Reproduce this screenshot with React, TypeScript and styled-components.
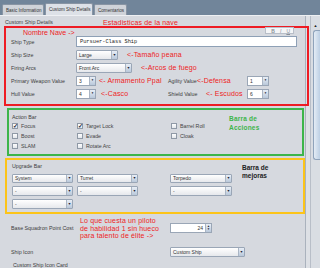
import React from "react";
import styled, { createGlobalStyle } from "styled-components";

const Global = createGlobalStyle`
  html, body { margin: 0; padding: 0; background: #d6d9df; }
  body { font-family: "Liberation Sans", Arial, sans-serif; }
`;

const Frame = styled.div`
  width: 320px;
  height: 268px;
  overflow: hidden;
  display: flex;
  flex-direction: column;
  background: #d6d9df;
`;

const TabStrip = styled.div`
  height: 15px;
  flex: none;
  background: #71859a;
  display: flex;
  align-items: flex-end;
  padding-left: 2px;
  gap: 1px;
  border-bottom: 1px solid #eef0f3;
`;

const Tab = styled.div<{ $active?: boolean; $w: number }>`
  height: ${(p) => (p.$active ? 12 : 11)}px;
  width: ${(p) => p.$w}px;
  box-sizing: border-box;
  border: 1px solid #8894a3;
  border-bottom: none;
  border-radius: 2px 2px 0 0;
  background: ${(p) => (p.$active ? "#dde1e7" : "#cfd3d9")};
  font-size: 4.6px;
  color: #333;
  display: flex;
  align-items: center;
  padding-left: 3px;
  white-space: nowrap;
  overflow: hidden;
`;

const Body = styled.div`
  flex: 1;
  display: flex;
  min-height: 0;
`;

const Content = styled.div`
  width: 310px;
  flex: none;
  box-shadow: inset -4px 0 0 #dde0e5, inset -5px 0 0 #aab2bd;
  display: flex;
  flex-direction: column;
`;

const TitleRow = styled.div`
  height: 10px;
  display: flex;
  align-items: flex-end;
  padding-left: 5px;
`;

const Title = styled.span`
  font-size: 5.3px;
  color: #444;
  width: 98px;
  line-height: 7px;
`;

const RedNote = styled.span<{ $size?: number }>`
  color: #ee1c24;
  font-size: ${(p) => p.$size ?? 7}px;
  line-height: 1.1;
  white-space: nowrap;
  letter-spacing: 0.15px;
`;

const TitleNote = styled(RedNote)`
  align-self: flex-start;
  margin-top: 3px;
`;

const Box = styled.div<{ $color: string; $ml: number; $w: number; $mt: number }>`
  box-sizing: border-box;
  margin-left: ${(p) => p.$ml}px;
  margin-top: ${(p) => p.$mt}px;
  width: ${(p) => p.$w}px;
  border: 2px solid ${(p) => p.$color};
`;

const StatsBox = styled(Box)`
  display: flex;
  flex-direction: column;
  gap: 3px;
  padding: 0 0 5px 5px;
`;

const HeaderRow = styled.div`
  height: 5px;
  display: flex;
  align-items: flex-start;
  padding-left: 12px;
`;

const NameNote = styled(RedNote)`
  margin-top: 1px;
  letter-spacing: 0;
`;

const Toolbar = styled.div`
  margin-left: auto;
  margin-right: 13px;
  margin-top: -1px;
  width: 29px;
  height: 7px;
  box-sizing: border-box;
  background: #f4f5f7;
  border: 1px solid #b8bec8;
  display: flex;
  align-items: center;
  justify-content: flex-end;
  gap: 5px;
  padding-right: 3px;
  font-size: 5px;
  color: #8a8f98;
`;

const FormRow = styled.div<{ $h?: number }>`
  height: ${(p) => p.$h ?? 10}px;
  display: flex;
  align-items: center;
`;

const Label = styled.span<{ $w?: number }>`
  font-size: 5.3px;
  color: #3c3c3c;
  width: ${(p) => p.$w ?? 65}px;
  flex: none;
  white-space: nowrap;
`;

const TextField = styled.div`
  width: 221px;
  height: 11px;
  box-sizing: border-box;
  background: #fff;
  border: 1px solid #8ea0b6;
  font-family: "Liberation Mono", monospace;
  font-size: 5.3px;
  color: #222;
  display: flex;
  align-items: center;
  padding-left: 3px;
`;

const ComboBox = styled.div<{ $w: number; $h?: number }>`
  width: ${(p) => p.$w}px;
  height: ${(p) => p.$h ?? 10}px;
  box-sizing: border-box;
  flex: none;
  border: 1px solid #9aa6b6;
  border-radius: 1px;
  background: linear-gradient(#ffffff, #e6e8ec);
  display: flex;
  align-items: stretch;
  font-size: 5px;
  color: #333;
`;

const ComboText = styled.span`
  flex: 1;
  display: flex;
  align-items: center;
  padding-left: 2px;
  overflow: hidden;
  white-space: nowrap;
`;

const ArrowBtn = styled.span`
  width: 5px;
  border-left: 1px solid #aab5c4;
  background: linear-gradient(#e8eef6, #b9c8da);
  display: flex;
  align-items: center;
  justify-content: center;
  font-size: 3.5px;
  color: #1c2430;
`;

const Combo = ({ w, text, h }: { w: number; text: string; h?: number }) => (
  <ComboBox $w={w} $h={h}>
    <ComboText>{text}</ComboText>
    <ArrowBtn>▼</ArrowBtn>
  </ComboBox>
);

const SpinBox = styled.div<{ $w: number }>`
  width: ${(p) => p.$w}px;
  height: 10px;
  box-sizing: border-box;
  flex: none;
  border: 1px solid #9aa6b6;
  background: #fff;
  display: flex;
  align-items: stretch;
  font-size: 5px;
  color: #333;
`;

const SpinText = styled.span<{ $right?: boolean }>`
  flex: 1;
  display: flex;
  align-items: center;
  justify-content: ${(p) => (p.$right ? "flex-end" : "flex-start")};
  padding: 0 2px;
`;

const SpinBtns = styled.span`
  width: 5px;
  border-left: 1px solid #aab5c4;
  background: linear-gradient(#e8eef6, #b9c8da);
  display: flex;
  flex-direction: column;
  align-items: center;
  justify-content: center;
  font-size: 3px;
  line-height: 3.5px;
  color: #1c2430;
`;

const Spinner = ({ w, value, right, dual }: { w: number; value: string; right?: boolean; dual?: boolean }) => (
  <SpinBox $w={w}>
    <SpinText $right={right}>{value}</SpinText>
    <SpinBtns>
      {dual ? (
        <>
          <span>▲</span>
          <span>▼</span>
        </>
      ) : (
        <span>▼</span>
      )}
    </SpinBtns>
  </SpinBox>
);

const InlineNote = styled(RedNote)<{ $ml: number }>`
  margin-left: ${(p) => p.$ml}px;
`;

const Cell = styled.div<{ $w: number }>`
  width: ${(p) => p.$w}px;
  flex: none;
  display: flex;
  align-items: center;
`;

const ActionBox = styled(Box)`
  display: grid;
  grid-template-columns: 65px 94px 58px 1fr;
  grid-template-rows: 8px 10px 10px 10px;
  align-items: center;
  padding: 3px 0 3px 3px;
`;

const Place = styled.div<{ $col: number; $row: number }>`
  grid-column: ${(p) => p.$col};
  grid-row: ${(p) => p.$row};
  display: flex;
  align-items: center;
`;

const SectionLabel = styled.span`
  font-size: 5.3px;
  color: #3c3c3c;
  grid-column: 1 / 4;
  grid-row: 1;
`;

const GreenNote = styled.div`
  grid-column: 4;
  grid-row: 1 / 3;
  align-self: start;
  margin-top: 1px;
  color: #3db54a;
  font-weight: bold;
  font-size: 6.5px;
  line-height: 9px;
  letter-spacing: 0.2px;
`;

const Check = styled.label`
  display: flex;
  align-items: center;
  gap: 3px;
  font-size: 5.3px;
  color: #444;
`;

const CheckBox = styled.span`
  width: 6px;
  height: 6px;
  box-sizing: border-box;
  border: 1px solid #8f99a6;
  background: linear-gradient(#fdfdfe, #e4e7ec);
  display: flex;
  align-items: center;
  justify-content: center;
  font-size: 6px;
  line-height: 1;
  color: #1d2a3a;
  font-weight: bold;
`;

const CheckItem = ({ label, on, col, row }: { label: string; on?: boolean; col: number; row: number }) => (
  <Place $col={col} $row={row}>
    <Check>
      <CheckBox>{on ? "✓" : ""}</CheckBox>
      {label}
    </Check>
  </Place>
);

const UpgradeBox = styled(Box)`
  display: grid;
  grid-template-columns: 65px 93px 72px 1fr;
  grid-template-rows: 8px 10px 10px 10px;
  row-gap: 3px;
  align-items: center;
  padding: 2px 0 3px 5px;
`;

const BlackNote = styled.div`
  grid-column: 4;
  grid-row: 1 / 3;
  align-self: start;
  margin-top: 2px;
  color: #222;
  font-weight: bold;
  font-size: 6.5px;
  line-height: 8px;
`;

const CostRow = styled.div`
  display: flex;
  align-items: center;
  padding-left: 11px;
  height: 25px;
  margin-top: 2px;
`;

const NoteBlock = styled.div`
  width: 90px;
  flex: none;
  display: flex;
  flex-direction: column;
  align-self: flex-start;
  margin-top: 1px;
`;

const Divider = styled.div`
  margin: 1px 0 0 5px;
  width: 293px;
  height: 1px;
  background: #b3b8c0;
`;

const IconRow = styled.div`
  display: flex;
  align-items: center;
  padding-left: 11px;
  height: 12px;
  margin-top: 6px;
`;

const CutLabel = styled.div`
  font-size: 5.3px;
  color: #3c3c3c;
  padding-left: 13px;
  margin-top: 5px;
`;

const Scrollbar = styled.div`
  flex: 1;
  display: flex;
  flex-direction: column;
  background: #d9dde3;
  border-left: 1px solid #b8bec8;
`;

const ScrollArrow = styled.div`
  height: 14px;
  display: flex;
  align-items: flex-end;
  justify-content: center;
  font-size: 4px;
  color: #222;
  padding-bottom: 2px;
  box-sizing: border-box;
`;

const Thumb = styled.div`
  height: 128px;
  margin-left: 2px;
  border: 1px solid #8fa3bb;
  border-right: none;
  border-radius: 3px 0 0 3px;
  background: linear-gradient(90deg, #e4ecf5, #bccfe4);
`;

export default function App() {
  return (
    <Frame>
      <Global />
      <TabStrip>
        <Tab $w={42}>Basic Information</Tab>
        <Tab $w={48} $active>
          Custom Ship Details
        </Tab>
        <Tab $w={33}>Comentarios</Tab>
      </TabStrip>
      <Body>
        <Content>
          <TitleRow>
            <Title>Custom Ship Details</Title>
            <TitleNote>Estadisticas de la nave</TitleNote>
          </TitleRow>
          <StatsBox $color="#ee1c24" $ml={4} $w={305} $mt={0}>
            <HeaderRow>
              <NameNote $size={7}>Nombre Nave -&gt;</NameNote>
              <Toolbar>
                <b>B</b>
                <i>I</i>
                <u>U</u>
              </Toolbar>
            </HeaderRow>
            <FormRow $h={11}>
              <Label>Ship Type</Label>
              <TextField>Pursuer-Class Ship</TextField>
            </FormRow>
            <FormRow>
              <Label>Ship Size</Label>
              <Combo w={42} text="Large" />
              <InlineNote $ml={9}>&lt;-Tamaño peana</InlineNote>
            </FormRow>
            <FormRow>
              <Label>Firing Arcs</Label>
              <Combo w={56} text="Front Arc" />
              <InlineNote $ml={9}>&lt;-Arcos de fuego</InlineNote>
            </FormRow>
            <FormRow>
              <Label>Primary Weapon Value</Label>
              <Cell $w={92}>
                <Spinner w={20} value="3" />
                <InlineNote $ml={3}>&lt;- Armamento Ppal</InlineNote>
              </Cell>
              <Cell $w={79}>
                <Label $w={29}>Agility Value</Label>
                <RedNote>&lt;-Defensa</RedNote>
              </Cell>
              <Spinner w={22} value="1" />
            </FormRow>
            <FormRow>
              <Label>Hull Value</Label>
              <Cell $w={92}>
                <Spinner w={20} value="4" />
                <InlineNote $ml={5}>&lt;-Casco</InlineNote>
              </Cell>
              <Cell $w={79}>
                <Label $w={38}>Shield Value</Label>
                <RedNote>&lt;- Escudos</RedNote>
              </Cell>
              <Spinner w={22} value="6" />
            </FormRow>
          </StatsBox>
          <ActionBox $color="#3db54a" $ml={7} $w={297} $mt={2}>
            <SectionLabel>Action Bar</SectionLabel>
            <GreenNote>
              Barra de
              <br />
              Acciones
            </GreenNote>
            <CheckItem label="Focus" on col={1} row={2} />
            <CheckItem label="Target Lock" on col={2} row={2} />
            <CheckItem label="Barrel Roll" col={3} row={2} />
            <CheckItem label="Boost" col={1} row={3} />
            <CheckItem label="Evade" col={2} row={3} />
            <CheckItem label="Cloak" col={3} row={3} />
            <CheckItem label="SLAM" col={1} row={4} />
            <CheckItem label="Rotate Arc" col={2} row={4} />
          </ActionBox>
          <UpgradeBox $color="#fcc419" $ml={5} $w={300} $mt={2}>
            <SectionLabel>Upgrade Bar</SectionLabel>
            <BlackNote>
              Barra de
              <br />
              mejoras
            </BlackNote>
            <Place $col={1} $row={2}>
              <Combo w={61} text="System" h={9} />
            </Place>
            <Place $col={2} $row={2}>
              <Combo w={61} text="Turret" h={9} />
            </Place>
            <Place $col={3} $row={2}>
              <Combo w={62} text="Torpedo" h={9} />
            </Place>
            <Place $col={1} $row={3}>
              <Combo w={61} text="-" />
            </Place>
            <Place $col={2} $row={3}>
              <Combo w={61} text="-" />
            </Place>
            <Place $col={3} $row={3}>
              <Combo w={62} text="-" />
            </Place>
            <Place $col={1} $row={4}>
              <Combo w={61} text="-" />
            </Place>
          </UpgradeBox>
          <CostRow>
            <Label $w={69}>Base Squadron Point Cost</Label>
            <NoteBlock>
              <RedNote>Lo que cuesta un piloto</RedNote>
              <RedNote>de habilidad 1 sin hueco</RedNote>
              <RedNote>para talento de élite -&gt;</RedNote>
            </NoteBlock>
            <Spinner w={42} value="24" right dual />
          </CostRow>
          <Divider />
          <IconRow>
            <Label $w={159}>Ship Icon</Label>
            <Combo w={75} text="Custom Ship" />
          </IconRow>
          <CutLabel>Custom Ship Icon Card</CutLabel>
        </Content>
        <Scrollbar>
          <ScrollArrow>▲</ScrollArrow>
          <Thumb />
        </Scrollbar>
      </Body>
    </Frame>
  );
}
